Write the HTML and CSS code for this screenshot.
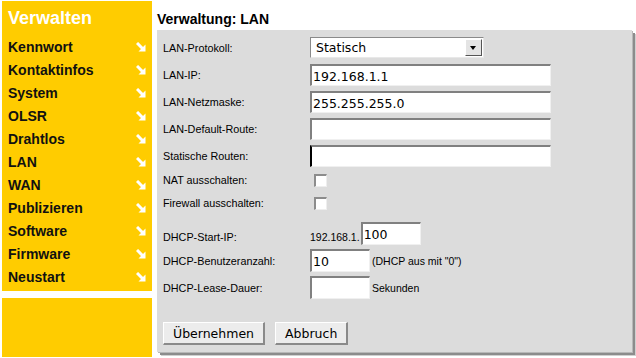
FILE: index.html
```html
<!DOCTYPE html>
<html lang="de">
<head>
    <meta charset="UTF-8">
    <title>Verwaltung: LAN</title>
    <link rel="stylesheet" href="styles.css">
</head>
<body>
    <div class="page">
        <!-- left menu -->
        <div class="sidebar">
            <div class="menu">
                <div class="menu-title">Verwalten</div>
                <div class="menu-item">Kennwort <svg class="arrow" viewBox="0 0 10 10"><path d="M1 1 L7 7" /><polygon points="9.5,2.5 9.5,9.5 2.5,9.5" /></svg></div>
                <div class="menu-item">Kontaktinfos <svg class="arrow" viewBox="0 0 10 10"><path d="M1 1 L7 7" /><polygon points="9.5,2.5 9.5,9.5 2.5,9.5" /></svg></div>
                <div class="menu-item">System <svg class="arrow" viewBox="0 0 10 10"><path d="M1 1 L7 7" /><polygon points="9.5,2.5 9.5,9.5 2.5,9.5" /></svg></div>
                <div class="menu-item">OLSR <svg class="arrow" viewBox="0 0 10 10"><path d="M1 1 L7 7" /><polygon points="9.5,2.5 9.5,9.5 2.5,9.5" /></svg></div>
                <div class="menu-item">Drahtlos <svg class="arrow" viewBox="0 0 10 10"><path d="M1 1 L7 7" /><polygon points="9.5,2.5 9.5,9.5 2.5,9.5" /></svg></div>
                <div class="menu-item">LAN <svg class="arrow" viewBox="0 0 10 10"><path d="M1 1 L7 7" /><polygon points="9.5,2.5 9.5,9.5 2.5,9.5" /></svg></div>
                <div class="menu-item">WAN <svg class="arrow" viewBox="0 0 10 10"><path d="M1 1 L7 7" /><polygon points="9.5,2.5 9.5,9.5 2.5,9.5" /></svg></div>
                <div class="menu-item">Publizieren <svg class="arrow" viewBox="0 0 10 10"><path d="M1 1 L7 7" /><polygon points="9.5,2.5 9.5,9.5 2.5,9.5" /></svg></div>
                <div class="menu-item">Software <svg class="arrow" viewBox="0 0 10 10"><path d="M1 1 L7 7" /><polygon points="9.5,2.5 9.5,9.5 2.5,9.5" /></svg></div>
                <div class="menu-item">Firmware <svg class="arrow" viewBox="0 0 10 10"><path d="M1 1 L7 7" /><polygon points="9.5,2.5 9.5,9.5 2.5,9.5" /></svg></div>
                <div class="menu-item">Neustart <svg class="arrow" viewBox="0 0 10 10"><path d="M1 1 L7 7" /><polygon points="9.5,2.5 9.5,9.5 2.5,9.5" /></svg></div>
            </div>
            <div class="menu-foot"></div>
        </div>

        <!-- content -->
        <div class="main">
            <h1>Verwaltung: LAN</h1>
            <div class="panel">
                <div class="row row-select">
                    <label>LAN-Protokoll:</label>
                    <div class="select">
                        <span>Statisch</span>
                        <span class="select-btn"></span>
                    </div>
                </div>
                <div class="row row-text">
                    <label>LAN-IP:</label>
                    <input type="text" class="field wide" value="192.168.1.1">
                </div>
                <div class="row row-text">
                    <label>LAN-Netzmaske:</label>
                    <input type="text" class="field wide" value="255.255.255.0">
                </div>
                <div class="row row-text">
                    <label>LAN-Default-Route:</label>
                    <input type="text" class="field wide" value="">
                </div>
                <div class="row row-text">
                    <label>Statische Routen:</label>
                    <input type="text" class="field wide focus" value="">
                </div>
                <div class="row row-check first-check">
                    <label>NAT ausschalten:</label>
                    <input type="checkbox" class="check">
                </div>
                <div class="row row-check">
                    <label>Firewall ausschalten:</label>
                    <input type="checkbox" class="check">
                </div>
                <div class="row row-dhcp first-dhcp">
                    <label>DHCP-Start-IP:</label>
                    <span class="note prefix">192.168.1.</span>
                    <input type="text" class="field short" value="100">
                </div>
                <div class="row row-dhcp">
                    <label>DHCP-Benutzeranzahl:</label>
                    <input type="text" class="field short" value="10">
                    <span class="note">(DHCP aus mit "0")</span>
                </div>
                <div class="row row-dhcp">
                    <label>DHCP-Lease-Dauer:</label>
                    <input type="text" class="field short" value="">
                    <span class="note">Sekunden</span>
                </div>
                <div class="buttons">
                    <button>Übernehmen</button>
                    <button>Abbruch</button>
                </div>
            </div>
        </div>
    </div>
</body>
</html>
```

FILE: styles.css
```css
/* Admin page for the LAN settings */
body {
    margin: 0;
    background-color: #fff;
    font-family: 'Liberation Sans', Arial, sans-serif;
    color: #000;
}
.page {
    display: flex;
    gap: 5px;
    padding: 1px 4px 0 2px;
}

/* Left menu */
.sidebar {
    width: 150px;
    flex-shrink: 0;
    display: flex;
    flex-direction: column;
    gap: 7px;
}
.menu {
    background-color: #ffcc00;
    padding-bottom: 3px;
}
.menu-title {
    height: 34px;
    line-height: 35px;
    padding-left: 6px;
    color: #fff;
    font-size: 18px;
    font-weight: bold;
}
.menu-item {
    height: 23px;
    display: flex;
    align-items: center;
    justify-content: space-between;
    padding: 0 6px 0 6px;
    font-size: 14px;
    font-weight: bold;
    color: #111;
}
.arrow {
    width: 10px;
    height: 10px;
}
.arrow path {
    stroke: #fff;
    stroke-width: 3;
    fill: none;
}
.arrow polygon {
    fill: #fff;
}
.menu-foot {
    background-color: #ffcc00;
    height: 59px;
}

/* Content */
.main {
    flex: 1;
}
h1 {
    margin: 0;
    height: 29px;
    line-height: 36px;
    font-size: 14px;
    font-weight: bold;
}
.panel {
    background-color: #dcdcdc;
    height: 322px;
    padding: 7px 6px 0 6px;
    box-sizing: border-box;
    box-shadow: 1px 1px 0 #b8b8b8, 3px 3px 0 #8c8c8c, 4px 4px 0 #d0d0d0;
}
.row {
    display: flex;
    align-items: center;
}
.row label {
    width: 147px;
    flex-shrink: 0;
    font-size: 10.8px;
}
.row-select { height: 21px; }
.row-text { height: 22px; margin-top: 5px; }
.row-select + .row-text { margin-top: 6px; }
.row-check { height: 20px; margin-top: 3px; }
.row-dhcp { height: 23px; margin-top: 4px; }
.first-dhcp { margin-top: 9px; }

/* Form controls */
.select {
    width: 174px;
    height: 21px;
    box-sizing: border-box;
    background-color: #fff;
    border-top: 1px solid #8a8a8a;
    border-left: 1px solid #8a8a8a;
    border-right: 1px solid #e8e8e8;
    border-bottom: 1px solid #e8e8e8;
    display: flex;
    align-items: center;
    justify-content: space-between;
    padding-left: 5px;
    font-family: 'DejaVu Sans', sans-serif;
    font-size: 12.5px;
}
.select-btn {
    width: 17px;
    height: 17px;
    margin-right: 1px;
    box-sizing: border-box;
    background-color: #e4e4e4;
    border-top: 1px solid #fff;
    border-left: 1px solid #fff;
    border-right: 1px solid #555;
    border-bottom: 1px solid #555;
    position: relative;
}
.select-btn::after {
    content: "";
    position: absolute;
    left: 4px;
    top: 6px;
    border-left: 3.5px solid transparent;
    border-right: 3.5px solid transparent;
    border-top: 4px solid #000;
}
.field {
    height: 22px;
    box-sizing: border-box;
    background-color: #fff;
    border-top: 2px solid #808080;
    border-left: 2px solid #808080;
    border-right: 1px solid #f0f0f0;
    border-bottom: 1px solid #f0f0f0;
    border-style: solid;
    padding: 1px 2px 0 1px;
    margin: 0;
    font-family: 'DejaVu Sans', sans-serif;
    font-size: 12.5px;
    color: #000;
    outline: none;
}
.wide { width: 241px; }
.short { width: 60px; height: 23px; }
.focus { border-left: 2px solid #000; }
.check {
    appearance: none;
    -webkit-appearance: none;
    width: 13px;
    height: 13px;
    margin: 0 0 0 4px;
    box-sizing: border-box;
    background-color: #fff;
    border-top: 2px solid #8c8c8c;
    border-left: 2px solid #8c8c8c;
    border-right: 1px solid #eee;
    border-bottom: 1px solid #eee;
}
.note {
    font-size: 10.5px;
    margin-left: 2px;
}
.note.prefix {
    margin-left: 0;
    margin-right: 1px;
    padding-top: 6px;
}
.first-dhcp label { padding-top: 6px; }

/* Buttons */
.buttons {
    display: flex;
    gap: 10px;
    margin-top: 23px;
}
button {
    height: 23px;
    padding: 0 9px;
    background-color: #ececec;
    border-top: 1px solid #fff;
    border-left: 1px solid #fff;
    border-right: 2px solid #8a8a8a;
    border-bottom: 2px solid #8a8a8a;
    border-style: solid;
    font-family: 'DejaVu Sans', sans-serif;
    font-size: 12.5px;
    color: #000;
}
```
